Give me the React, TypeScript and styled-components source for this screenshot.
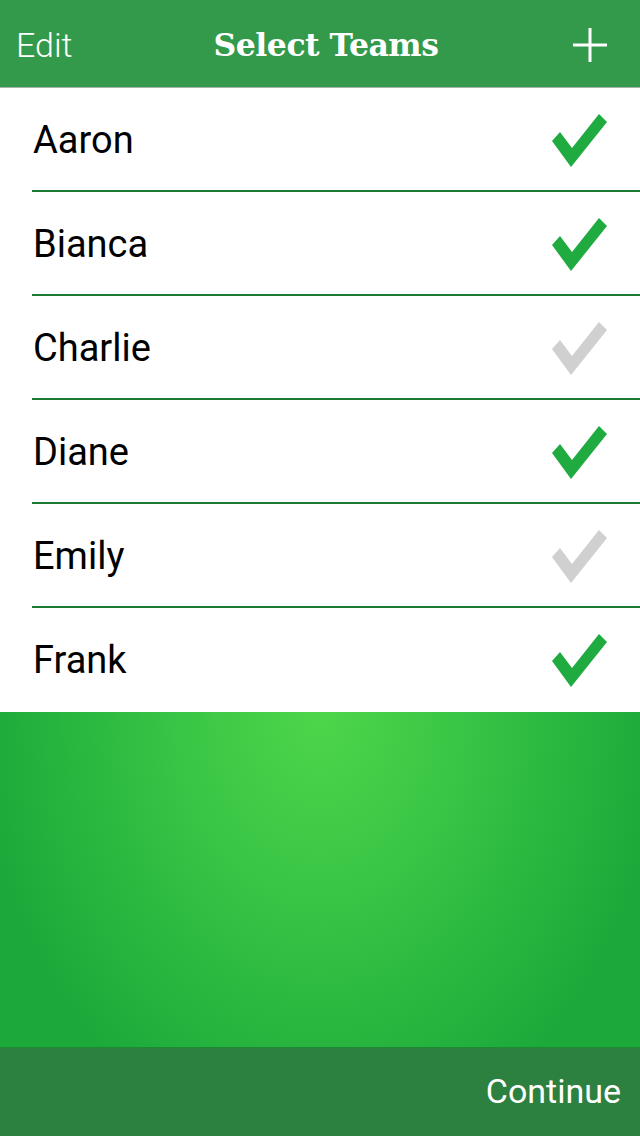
import styled, { createGlobalStyle } from "styled-components";

const GlobalStyle = createGlobalStyle`
  html, body {
    margin: 0;
    padding: 0;
    background: #ffffff;
  }
  #root {
    height: 1136px;
  }
`;

const Screen = styled.div`
  display: flex;
  flex-direction: column;
  width: 640px;
  height: 1136px;
  font-family: Roboto, "Liberation Sans", sans-serif;
`;

const Header = styled.header`
  display: flex;
  align-items: center;
  justify-content: space-between;
  box-sizing: border-box;
  height: 88px;
  padding: 2px 32px 0 16px;
  background-color: #329a4a;
  border-bottom: 1px solid #a9b3ab;
  color: #ffffff;
`;

const HeaderButton = styled.span`
  font-size: 34px;
  font-weight: 300;
  width: 134px;
`;

const Title = styled.h1`
  margin: 0;
  font-family: "DejaVu Serif", "Liberation Serif", serif;
  font-size: 31.5px;
  font-weight: bold;
  letter-spacing: -0.5px;
`;

const PlusSlot = styled.span`
  display: flex;
  justify-content: flex-end;
  width: 106px;
`;

const List = styled.ul`
  margin: 0;
  padding: 0;
  list-style: none;
  background: #ffffff;
`;

const Row = styled.li`
  box-sizing: border-box;
  height: 104px;
  display: flex;
  align-items: center;
  justify-content: space-between;
  padding: 0 29px 0 33px;
  position: relative;
  font-size: 38px;
  color: #000000;

  &:not(:last-child)::after {
    content: "";
    position: absolute;
    left: 32px;
    right: 0;
    bottom: 0;
    height: 2px;
    background: #1b7a31;
  }
`;

const Field = styled.div`
  flex: 1;
  background: radial-gradient(
    ellipse 340px 440px at 50% 0%,
    #4dd64b 0%,
    #3cc846 35%,
    #1ca93a 100%
  );
`;

const Footer = styled.footer`
  display: flex;
  align-items: center;
  justify-content: flex-end;
  box-sizing: border-box;
  height: 89px;
  padding: 0 19px 2px 0;
  background: #2c8040;
  border-top: 1px solid #1d8a33;
  color: #ffffff;
  font-size: 34px;
`;

const Check = ({ on }: { on: boolean }) => (
  <svg width="60" height="60" viewBox="0 0 60 60">
    <path
      d="M1 31 L9 22 L21 38 L48 4 L56 12 L20 57 Z"
      fill={on ? "#1fab40" : "#d0d0d0"}
    />
  </svg>
);

const teams = [
  { name: "Aaron", on: true },
  { name: "Bianca", on: true },
  { name: "Charlie", on: false },
  { name: "Diane", on: true },
  { name: "Emily", on: false },
  { name: "Frank", on: true },
];

export default function App() {
  return (
    <>
      <GlobalStyle />
      <Screen>
        <Header>
          <HeaderButton>Edit</HeaderButton>
          <Title>Select Teams</Title>
          <PlusSlot>
            <svg width="36" height="36" viewBox="0 0 36 36">
              <path d="M18 1 V35 M1 18 H35" stroke="#fff" strokeWidth="3" />
            </svg>
          </PlusSlot>
        </Header>
        <List>
          {teams.map((t) => (
            <Row key={t.name}>
              <span>{t.name}</span>
              <Check on={t.on} />
            </Row>
          ))}
        </List>
        <Field />
        <Footer>Continue</Footer>
      </Screen>
    </>
  );
}
